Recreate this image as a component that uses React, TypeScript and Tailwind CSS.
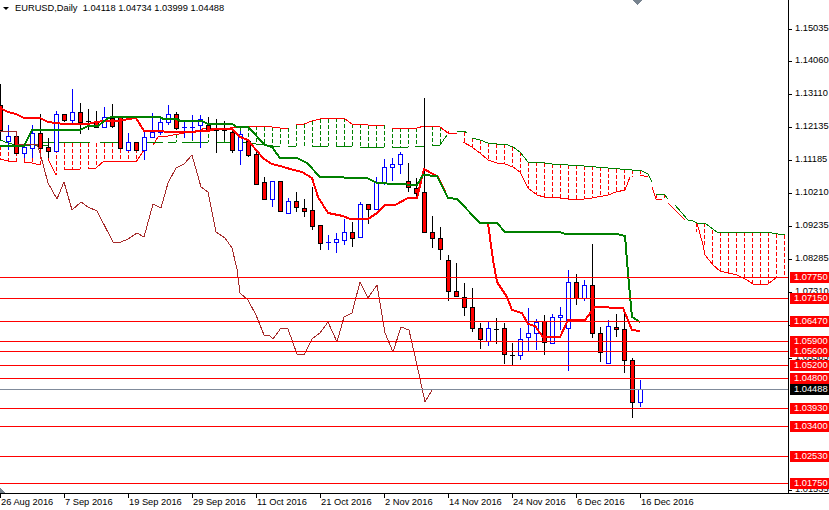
import React from "react";

// [high, bodyTop, bodyBottom, low, kind] one candle every 8px. r = down, b = up
type Candle = [number, number, number, number, "r" | "b"];

const candles: Candle[] = [
  [84, 105, 130, 140, "r"], [125, 136, 141, 150, "b"], [135, 136, 153, 154, "r"], [143, 147, 153, 158, "b"],
  [125, 133, 148, 158, "b"], [114, 133, 148, 149, "r"], [138, 147, 151, 158, "r"], [111, 114, 151, 152, "b"],
  [114, 114, 120, 122, "r"], [89, 112, 120, 125, "b"], [103, 112, 122, 134, "r"], [109, 121, 121, 130, "r"],
  [111, 121, 127, 128, "r"], [107, 117, 127, 128, "b"], [104, 118, 126, 128, "r"], [117, 117, 148, 149, "r"],
  [133, 142, 150, 151, "b"], [142, 142, 150, 151, "r"], [130, 137, 150, 160, "b"], [113, 132, 137, 138, "b"],
  [118, 122, 132, 135, "b"], [105, 114, 122, 125, "b"], [112, 114, 128, 130, "r"], [120, 127, 127, 138, "b"],
  [115, 127, 127, 140, "b"], [115, 119, 125, 148, "b"], [117, 125, 130, 132, "r"], [119, 130, 130, 153, "r"],
  [121, 130, 130, 140, "r"], [130, 132, 150, 153, "r"], [131, 134, 150, 165, "b"], [140, 141, 155, 157, "r"],
  [150, 154, 184, 185, "r"], [177, 182, 199, 199, "r"], [181, 181, 199, 207, "b"], [181, 181, 211, 212, "r"],
  [198, 201, 213, 214, "b"], [192, 201, 207, 212, "r"], [199, 208, 211, 217, "r"], [187, 210, 226, 230, "r"],
  [225, 225, 243, 250, "r"], [235, 242, 242, 250, "b"], [233, 239, 242, 253, "b"], [219, 232, 240, 245, "b"],
  [222, 232, 238, 247, "r"], [202, 204, 237, 238, "b"], [204, 204, 209, 224, "r"], [177, 182, 209, 209, "b"],
  [159, 167, 182, 185, "b"], [158, 164, 167, 181, "b"], [152, 154, 164, 174, "b"], [163, 181, 187, 192, "r"],
  [178, 188, 193, 198, "r"], [98, 192, 232, 232, "r"], [216, 232, 238, 248, "r"], [227, 238, 249, 260, "r"],
  [255, 260, 291, 301, "r"], [263, 291, 296, 297, "r"], [283, 297, 307, 316, "r"], [288, 307, 328, 332, "r"],
  [323, 328, 339, 349, "r"], [322, 328, 341, 346, "b"], [318, 329, 329, 344, "r"], [323, 328, 354, 364, "r"],
  [343, 355, 355, 365, "r"], [328, 339, 355, 360, "b"], [308, 333, 337, 351, "b"], [319, 322, 333, 350, "b"],
  [315, 321, 342, 355, "r"], [314, 317, 343, 344, "b"], [307, 315, 317, 330, "b"], [270, 282, 328, 371, "b"],
  [274, 282, 298, 305, "r"], [280, 285, 298, 301, "b"], [244, 285, 333, 338, "r"], [327, 333, 352, 362, "r"],
  [320, 326, 363, 364, "b"], [314, 327, 329, 337, "r"], [313, 329, 360, 373, "r"], [358, 360, 402, 418, "r"],
  [380, 389, 402, 407, "b"],
];

const tenkan = "0,108 8,112 16,114 24,118 40,118 48,122 64,124 88,124 96,122 104,121 120,121 128,119 136,118 144,131 152,131 176,132 184,132 208,131 216,129 232,129 240,137 248,140 256,150 264,159 272,164 280,166 290,169 302,172 312,178 318,197 328,213 343,216 350,219 368,219 377,213 385,205 395,205 408,198 417,198 424,169 438,177 448,198 457,199 480,223 488,223 493,260 497,282 507,297 512,310 522,313 528,324 535,326 543,337 560,337 568,320 585,320 595,307 623,308 632,330 640,331";
const kijun = "0,146 24,146 32,130 80,130 88,126 98,126 108,118 112,117 160,117 163,119 177,119 180,121 202,121 208,124 232,124 237,127 248,127 265,145 272,147 280,158 297,158 307,163 320,177 367,178 377,183 417,185 423,175 437,176 448,198 457,199 480,223 497,223 505,232 560,232 565,234 617,234 625,236 628,273 632,317 640,322";
const chikou = "0,131 16,131 18,144 37,144 40,153 48,183 57,199 64,182 72,210 81,202 88,207 97,211 113,242 121,242 128,239 137,233 144,237 153,204 161,208 168,183 176,168 184,164 192,155 201,187 208,192 216,232 225,238 232,248 237,269 240,293 248,300 256,315 264,335 270,336 273,339 281,328 288,329 297,354 304,355 312,339 320,333 328,322 337,342 344,317 352,313 360,282 368,298 377,285 385,333 393,352 401,327 409,330 417,365 425,402 432,390";

// cloud columns: [x, top, bottom]
const redColumns: number[][] = [
  [0, 146, 159], [8, 146, 161], [16, 146, 162], [24, 146, 162], [32, 146, 163], [40, 143, 165], [48, 143, 159],
  [56, 143, 175], [64, 143, 169], [72, 143, 169], [80, 143, 169], [88, 143, 168], [96, 143, 168], [104, 143, 161],
  [112, 143, 161], [120, 143, 161], [128, 143, 161], [136, 143, 162], [144, 143, 150],
  [464, 132, 142], [472, 138, 147], [480, 140, 153], [488, 143, 160], [496, 144, 163], [504, 144, 164],
  [512, 147, 167], [520, 152, 172], [528, 162, 188], [536, 162, 195], [544, 163, 197], [552, 164, 197],
  [560, 164, 198], [568, 165, 199], [576, 165, 200], [584, 166, 199], [592, 166, 198], [600, 167, 196],
  [608, 168, 195], [616, 169, 192], [624, 169, 190], [632, 170, 177], [640, 170, 175], [656, 194, 199],
  [664, 194, 199], [696, 223, 232], [704, 223, 245], [712, 230, 265], [720, 232, 271], [728, 232, 273],
  [736, 232, 275], [744, 232, 279], [752, 232, 284], [760, 232, 284], [768, 232, 284], [776, 234, 277], [784, 235, 277],
];
const greenColumns: number[][] = [
  [176, 134, 142], [192, 131, 142], [200, 130, 142], [208, 128, 142], [216, 128, 142], [224, 128, 142],
  [232, 128, 142], [240, 127, 142], [248, 127, 142], [256, 126, 142], [264, 127, 144], [272, 127, 146],
  [280, 128, 146], [288, 128, 146], [296, 125, 146], [304, 124, 146], [312, 121, 146], [320, 119, 146],
  [328, 119, 146], [336, 118, 146], [344, 118, 146], [352, 124, 146], [360, 124, 147], [368, 125, 147],
  [376, 125, 147], [384, 125, 147], [392, 128, 147], [400, 128, 147], [408, 128, 147], [416, 128, 147],
  [424, 126, 146], [432, 126, 145], [440, 127, 145],
];
const redEdges = [
  "0,159 8,161 16,162", "24,162 32,163 40,165", "48,159 56,175", "64,169 80,169", "88,168 96,168 104,161 128,161 136,162 144,150",
  "153,145 158,137 168,136 200,130 205,128 230,128 256,126 272,127 280,128 288,128", "296,125 304,124 312,121 320,119 336,118 344,118 352,124 368,124", "368,125 384,125", "392,128 417,128 424,126 432,126 440,127 448,133 457,133",
  "448,133 448,131", "463,142 472,147 480,153 488,160 497,163 505,164 513,167 520,172 528,188 537,195 544,197 560,198 576,200 592,198 608,195 616,192 625,190 630,177", "640,175 648,177", "652,187 656,199 662,199", "668,203 685,220", "697,223 703,245 705,255 713,265 720,271 737,275 747,280 753,284 768,284 777,277 785,277",
];
const greenEdges = [
  "0,140 8,143 16,145 48,145", "40,142 90,142", "100,142 118,142", "143,142 163,142", "168,142 176,142", "182,142 208,142", "217,142 233,142", "240,142 272,146",
  "272,146 280,146", "288,146 296,146", "312,146 328,146", "336,146 352,146", "360,147 384,147", "392,147 408,147", "415,147 424,146", "432,145 440,145 447,135",
  "457,131 464,131 467,133", "472,138 480,140 488,143 497,144 505,144 513,147 520,152 528,162 537,162 552,164 584,166 620,169 632,170 640,170 648,174 652,182", "656,194 664,194 668,199", "675,205 688,220 693,221 697,223 705,223 717,232 765,232 785,235",
];

const levels = [277, 298, 321, 341, 351, 365, 378, 408, 426, 456, 483];

const scale: [string, number][] = [
  ["1.15035", 29], ["1.14060", 61], ["1.13110", 94], ["1.12135", 127], ["1.11185", 160], ["1.10210", 193],
  ["1.09235", 226], ["1.08285", 259], ["1.07310", 292], ["1.06360", 325], ["1.05385", 358], ["1.01535", 490],
];
const tags: [string, number][] = [
  ["1.07750", 277], ["1.07150", 298], ["1.06470", 321], ["1.05900", 341], ["1.05600", 351], ["1.05200", 365],
  ["1.04800", 378], ["1.03930", 408], ["1.03400", 426], ["1.02530", 456], ["1.01750", 483],
];
const dates: [string, number][] = [
  ["26 Aug 2016", 0], ["7 Sep 2016", 64], ["19 Sep 2016", 128], ["29 Sep 2016", 192], ["11 Oct 2016", 256],
  ["21 Oct 2016", 320], ["2 Nov 2016", 384], ["14 Nov 2016", 448], ["24 Nov 2016", 512], ["6 Dec 2016", 576],
  ["16 Dec 2016", 640],
];

const CandleMark = ({ c, x }: { c: Candle; x: number }) => {
  const [high, top, bottom, low, kind] = c;
  const color = kind === "b" ? "#0000ff" : "#000000";
  return (
    <g>
      <line x1={x + 0.5} x2={x + 0.5} y1={high} y2={low} stroke={color} />
      {top === bottom ? (
        <line x1={x - 2} x2={x + 3} y1={top + 0.5} y2={top + 0.5} stroke={color} />
      ) : (
        <rect
          x={x - 1.5}
          y={top + 0.5}
          width={4}
          height={bottom - top}
          fill={kind === "b" ? "#ffffff" : "#ff0000"}
          stroke={color}
        />
      )}
    </g>
  );
};

const Chart = () => (
  <svg width={788} height={493} className="block" shapeRendering="crispEdges" fill="none">
    {redColumns.map(([x, a, b]) => (
      <line key={x} x1={x + 0.5} x2={x + 0.5} y1={a} y2={b} stroke="#ff0000" strokeDasharray="4 2" />
    ))}
    {greenColumns.map(([x, a, b]) => (
      <line key={x} x1={x + 0.5} x2={x + 0.5} y1={a} y2={b} stroke="#008000" strokeDasharray="4 2" />
    ))}
    {redEdges.map((p) => (
      <polyline key={p} points={p} stroke="#ff0000" />
    ))}
    {greenEdges.map((p) => (
      <polyline key={p} points={p} stroke="#008000" />
    ))}
    {candles.map((c, i) => (
      <CandleMark key={i} c={c} x={i * 8} />
    ))}
    <polyline points={chikou} stroke="#a52a2a" />
    <polyline points={tenkan} stroke="#ff0000" strokeWidth={2} />
    <polyline points={kijun} stroke="#008000" strokeWidth={2} />
    {levels.map((y) => (
      <line key={y} x1={0} x2={788} y1={y + 0.5} y2={y + 0.5} stroke="#ff0000" />
    ))}
    <line x1={0} x2={788} y1={389.5} y2={389.5} stroke="#808b9b" />
    <polygon points="632,0 642,0 637,5" fill="#77838f" />
    <polygon points="0,488 5,493 0,493" fill="#77838f" />
  </svg>
);

export default function App() {
  return (
    <div className="w-[829px] h-[510px] bg-white overflow-hidden flex flex-col text-black font-['Liberation_Sans',sans-serif] text-[9.3px] leading-none">
      <div className="flex h-[493px]">
        <div className="relative w-[788px]">
          <Chart />
          <div className="absolute top-[3px] left-[3px] flex items-center gap-[6px] h-[11px]">
            <span className="w-0 h-0 border-x-[3px] border-t-[3px] border-x-transparent border-t-black" />
            <span className="whitespace-pre">EURUSD,Daily  1.04118 1.04734 1.03999 1.04488</span>
          </div>
        </div>
        <div className="relative flex-1 border-l border-black">
          {scale.map(([v, y]) => (
            <div key={v} className="absolute left-0 flex items-center gap-[3px] h-[10px]" style={{ top: y - 5 }}>
              <span className="w-[3px] h-px bg-black" />
              <span>{v}</span>
            </div>
          ))}
          {tags.map(([v, y]) => (
            <div key={v} className="absolute left-px right-0 h-[11px] bg-[#ff0000] text-white flex items-center pl-1" style={{ top: y - 5 }}>
              {v}
            </div>
          ))}
          <div className="absolute left-px right-0 h-[11px] bg-black text-white flex items-center pl-1 top-[384px]">1.04488</div>
        </div>
      </div>
      <div className="relative flex-1 border-t border-black">
        {dates.map(([d, x]) => (
          <div key={d} className="absolute top-0 whitespace-nowrap" style={{ left: x }}>
            <span className="block w-px h-[4px] bg-black" />
            <span className="block pl-px">{d}</span>
          </div>
        ))}
      </div>
    </div>
  );
}
